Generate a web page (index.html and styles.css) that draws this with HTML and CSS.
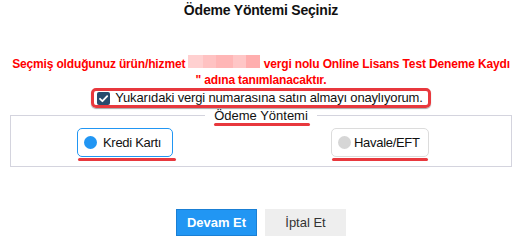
FILE: index.html
```html
<!DOCTYPE html>
<html lang="tr">
<head>
    <meta charset="UTF-8">
    <title>Ödeme Yöntemi</title>
    <link rel="stylesheet" href="styles.css">
</head>
<body>
<div class="payment">
    <h3 class="payment-title">Ödeme Yöntemi Seçiniz</h3>

    <p class="payment-notice">
        Seçmiş olduğunuz ürün/hizmet <span class="blurred"></span> vergi nolu Online Lisans Test Deneme Kaydı<br>
        " adına tanımlanacaktır.
    </p>

    <div class="confirm-row">
        <label class="confirm">
            <span class="check">
                <svg width="13" height="13" viewBox="0 0 13 13"><path d="M3 6.8 L5.4 9.2 L10.2 4.2" fill="none" stroke="#fff" stroke-width="1.8" stroke-linecap="round" stroke-linejoin="round"/></svg>
            </span>
            Yukarıdaki vergi numarasına satın almayı onaylıyorum.
        </label>
    </div>

    <fieldset class="methods">
        <legend class="marked">Ödeme Yöntemi</legend>
        <div class="method-list">
            <label class="method method-active marked"><span class="dot"></span>Kredi Kartı</label>
            <label class="method method-wide marked"><span class="dot"></span>Havale/EFT</label>
        </div>
    </fieldset>

    <div class="actions">
        <button class="btn btn-primary">Devam Et</button>
        <button class="btn">İptal Et</button>
    </div>
</div>
</body>
</html>
```

FILE: styles.css
```css
body {
    margin: 0;
    font-family: "Liberation Sans", Arial, sans-serif;
    color: #222;
    background: #fff;
}
h3, p, fieldset, legend {
    margin: 0;
    padding: 0;
}
.payment {
    padding: 2px 14px 0 10px;
}
.payment-title {
    text-align: center;
    font-size: 14px;
    line-height: 17px;
    font-weight: bold;
    color: #111;
    letter-spacing: -0.2px;
}
.payment-notice {
    margin: 36px -14px 0 -10px;
    padding-right: 4px;
    text-align: center;
    white-space: nowrap;
    color: #ff0000;
    font-size: 12px;
    font-weight: bold;
    line-height: 16px;
    letter-spacing: -0.15px;
}
.blurred {
    display: inline-block;
    width: 72px;
    height: 13px;
    background: linear-gradient(to right,
        #ffd0d0 0, #ffd0d0 15px,
        #ffc2c2 15px, #ffc2c2 28px,
        #ffb6b6 28px, #ffb6b6 45px,
        #ffc6c6 45px, #ffc6c6 58px,
        #ffaeae 58px);
}
.confirm-row {
    display: flex;
    justify-content: center;
}
.confirm {
    display: flex;
    align-items: center;
    gap: 5px;
    height: 14px;
    padding: 0 5px 0 3px;
    border: 3px solid #e8383d;
    border-radius: 5px;
    box-shadow: 0 1px 1px rgba(0, 0, 0, 0.35);
    font-size: 13px;
    line-height: 14px;
    letter-spacing: -0.17px;
    white-space: nowrap;
    color: #111;
}
.check {
    display: block;
    flex: none;
    width: 13px;
    height: 13px;
    border-radius: 2px;
    background: #274b6d;
}
.check svg {
    display: block;
}
.methods {
    width: 502px;
    box-sizing: border-box;
    border: 1px solid #d4d4de;
    padding: 5px 0 9px 0;
}
.methods legend {
    margin: 0 auto;
    padding: 0 9px;
    font-size: 13px;
    line-height: 15px;
    color: #111;
}
.marked {
    position: relative;
}
.marked::after {
    content: "";
    position: absolute;
    height: 3px;
    border-radius: 2px;
    background: #e8383d;
}
.methods legend::after {
    left: 9px;
    right: 7px;
    bottom: -3px;
}
.method-list {
    display: flex;
    gap: 158px;
    padding-left: 66px;
}
.method {
    display: flex;
    align-items: center;
    gap: 6px;
    width: 96px;
    height: 29px;
    box-sizing: border-box;
    padding: 0 0 0 6px;
    border: 1px solid #dcdcdc;
    border-radius: 5px;
    font-size: 13px;
    letter-spacing: -0.3px;
    white-space: nowrap;
    color: #111;
}
.method-wide {
    width: 98px;
    gap: 3px;
}
.method::after {
    left: 0;
    right: -4px;
    bottom: -5px;
}
.method-wide::after {
    right: 0;
}
.method-active {
    border-color: #2196f3;
}
.dot {
    flex: none;
    width: 13px;
    height: 13px;
    border-radius: 50%;
    background: #d6d6d6;
}
.method-active .dot {
    background: #2196f3;
}
.actions {
    display: flex;
    justify-content: center;
    gap: 8px;
    margin-top: 42px;
}
.btn {
    width: 81px;
    height: 27px;
    border: 1px solid #eeeeee;
    background: #eeeeee;
    color: #333;
    font-family: "Liberation Sans", Arial, sans-serif;
    font-size: 13px;
    padding: 0;
}
.btn-primary {
    background: #2196f3;
    border-color: #1a7fd4;
    color: #fff;
    font-weight: bold;
}
```
